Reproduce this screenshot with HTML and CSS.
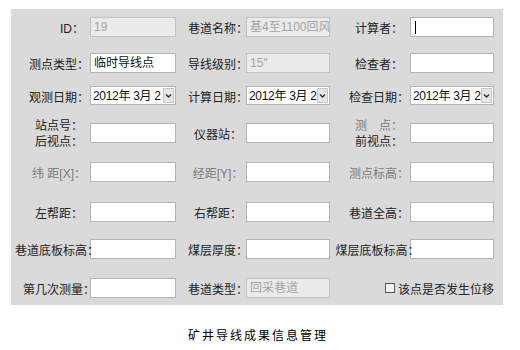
FILE: index.html
```html
<!DOCTYPE html>
<html lang="zh-CN">
<head>
    <meta charset="UTF-8">
    <title>矿井导线成果信息管理</title>
    <link rel="stylesheet" href="styles.css">
</head>
<body>
    <div class="wrap">
        <div class="panel">
            <!-- 第1行 -->
            <div class="lbl c1 end">ID：</div>
            <div class="field off">19</div>
            <div class="lbl c2">巷道名称：</div>
            <div class="field off">基4至1100回风巷</div>
            <div class="lbl c3">计算者：</div>
            <div class="field"><span class="caret"></span></div>

            <!-- 第2行 -->
            <div class="lbl c1">测点类型：</div>
            <div class="field">临时导线点</div>
            <div class="lbl c2">导线级别：</div>
            <div class="field off">15″</div>
            <div class="lbl c3">检查者：</div>
            <div class="field"></div>

            <!-- 第3行 -->
            <div class="lbl c1">观测日期：</div>
            <div class="field date"><span class="txt">2012年 3月 2</span><span class="drop"><svg width="9" height="9" viewBox="0 0 9 9"><path d="M2 3.5 L4.5 6 L7 3.5" fill="none" stroke="#333" stroke-width="1.4"/></svg></span></div>
            <div class="lbl c2">计算日期：</div>
            <div class="field date"><span class="txt">2012年 3月 2</span><span class="drop"><svg width="9" height="9" viewBox="0 0 9 9"><path d="M2 3.5 L4.5 6 L7 3.5" fill="none" stroke="#333" stroke-width="1.4"/></svg></span></div>
            <div class="lbl c3">检查日期：</div>
            <div class="field date"><span class="txt">2012年 3月 2</span><span class="drop"><svg width="9" height="9" viewBox="0 0 9 9"><path d="M2 3.5 L4.5 6 L7 3.5" fill="none" stroke="#333" stroke-width="1.4"/></svg></span></div>

            <!-- 第4行 -->
            <div class="lbl c1"><div class="two">站点号：<br>后视点：</div></div>
            <div class="field"></div>
            <div class="lbl c2">仪器站：</div>
            <div class="field"></div>
            <div class="lbl c3"><div class="two"><span class="dim">测　点：</span><br>前视点：</div></div>
            <div class="field"></div>

            <!-- 第5行 -->
            <div class="lbl c1 dim">纬 距[X]：</div>
            <div class="field"></div>
            <div class="lbl c2 dim">经距[Y]：</div>
            <div class="field"></div>
            <div class="lbl c3 dim">测点标高：</div>
            <div class="field"></div>

            <!-- 第6行 -->
            <div class="lbl c1">左帮距：</div>
            <div class="field"></div>
            <div class="lbl c2">右帮距：</div>
            <div class="field"></div>
            <div class="lbl c3">巷道全高：</div>
            <div class="field"></div>

            <!-- 第7行 -->
            <div class="lbl c1 wide">巷道底板标高：</div>
            <div class="field"></div>
            <div class="lbl c2">煤层厚度：</div>
            <div class="field"></div>
            <div class="lbl c3 wide">煤层底板标高：</div>
            <div class="field"></div>

            <!-- 第8行 -->
            <div class="lbl c1">第几次测量：</div>
            <div class="field"></div>
            <div class="lbl c2">巷道类型：</div>
            <div class="field off">回采巷道</div>
            <div class="check"><span class="box"></span>该点是否发生位移</div>
        </div>
        <p class="caption">矿井导线成果信息管理</p>
    </div>
</body>
</html>
```

FILE: styles.css
```css
body {
    margin: 0;
    background: #fff;
    font-family: "Liberation Sans", "Noto Sans CJK SC", sans-serif;
    font-size: 12px;
    color: #222;
}

.wrap {
    width: 492px;
    margin: 9px 0 0 11px;
}

/* --- 表单面板 --- */
.panel {
    background: #dadada;
    display: grid;
    grid-template-columns: 79px 86px 70px 84px 80px 84px;
    grid-template-rows: 36px 33px 37px 39px 40px 37px 39px 20px;
    align-items: start;
    padding: 8px 0 7px 0;
}

.lbl {
    height: 20px;
    display: flex;
    align-items: center;
    justify-content: center;
    white-space: nowrap;
    position: relative;
    z-index: 1; /* 冒号可以压在输入框边上 */
}

.lbl.c1 { padding-left: 17px; }
.lbl.c2 { padding-left: 14px; }
.lbl.c3 { padding-left: 18px; }
.lbl.c1.wide { padding-left: 13px; }
.lbl.c3.wide { padding-left: 15px; }

.lbl.end {
    justify-content: flex-end;
    padding-right: 6px;
}

.dim { color: #7a7a7a; }

.two {
    line-height: 16px;
    margin-top: 2px;
}

.field {
    box-sizing: border-box;
    height: 20px;
    border: 1px solid #b3b3b3;
    background: #fff;
    padding: 0 3px;
    line-height: 18px;
    white-space: nowrap;
    overflow: hidden;
    color: #111;
}

.field.off {
    background: #ebebeb;
    border-color: #c2c2c2;
    color: #a4a4a4;
}

.caret {
    display: inline-block;
    width: 1px;
    height: 13px;
    background: #000;
    vertical-align: middle;
    margin-left: 1px;
}

/* --- 日期选择 --- */
.field.date {
    height: 19px;
    display: flex;
    align-items: center;
    padding: 0 1px 0 2px;
}

.date .txt {
    flex: 1;
    overflow: hidden;
    letter-spacing: -0.3px;
}

.drop {
    width: 11px;
    height: 15px;
    background: #e6e6e6;
    border: 1px solid #c6c6c6;
    box-sizing: border-box;
    display: flex;
    align-items: center;
    justify-content: center;
}

/* --- 复选框 --- */
.check {
    grid-column: 5 / 7;
    justify-self: end;
    height: 20px;
    display: flex;
    align-items: center;
    gap: 3px;
    color: #222;
}

.check .box {
    width: 10px;
    height: 10px;
    box-sizing: border-box;
    border: 1px solid #555;
    background: #f4f4f4;
}

.caption {
    margin: 23px 0 0;
    text-align: center;
    line-height: 16px;
    letter-spacing: 2px;
    padding-left: 2px;
    color: #000;
}
```
